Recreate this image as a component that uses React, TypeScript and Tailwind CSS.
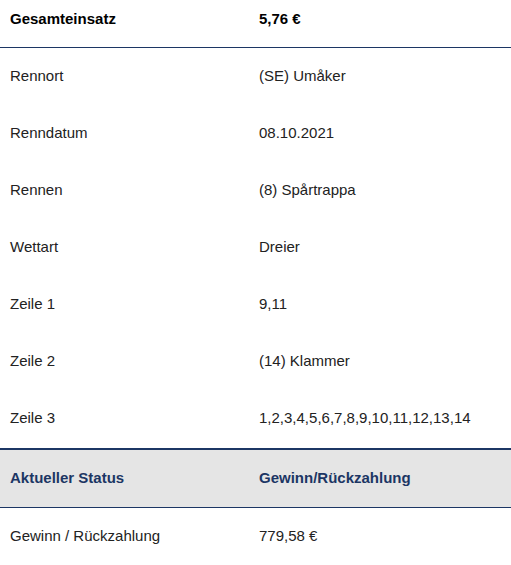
const rows = [
  ['Rennort', '(SE) Umåker'],
  ['Renndatum', '08.10.2021'],
  ['Rennen', '(8) Spårtrappa'],
  ['Wettart', 'Dreier'],
  ['Zeile 1', '9,11'],
  ['Zeile 2', '(14) Klammer'],
  ['Zeile 3', '1,2,3,4,5,6,7,8,9,10,11,12,13,14'],
];

export default function App() {
  return (
    <div className="w-[511px] h-[565px] overflow-hidden bg-white text-[15px] text-[#222] font-['Liberation_Sans',Arial,sans-serif]">
      <div className="-mt-[9px] flex h-[57px] items-center border-b border-[#1c3664] font-bold text-black">
        <div className="w-[259px] pl-[10px]">Gesamteinsatz</div>
        <div>5,76 €</div>
      </div>

      {rows.map(([label, value]) => (
        <div key={label} className="flex h-[57px] items-center">
          <div className="w-[259px] pl-[10px]">{label}</div>
          <div>{value}</div>
        </div>
      ))}

      {/* status header */}
      <div className="mt-px flex h-[60px] items-center border-t-2 border-b border-[#1c3664] bg-[#e5e5e5] font-bold text-[#1c3664]">
        <div className="w-[259px] pl-[10px]">Aktueller Status</div>
        <div>Gewinn/Rückzahlung</div>
      </div>

      <div className="flex h-[57px] items-center">
        <div className="w-[259px] pl-[10px]">Gewinn / Rückzahlung</div>
        <div>779,58 €</div>
      </div>
    </div>
  );
}
